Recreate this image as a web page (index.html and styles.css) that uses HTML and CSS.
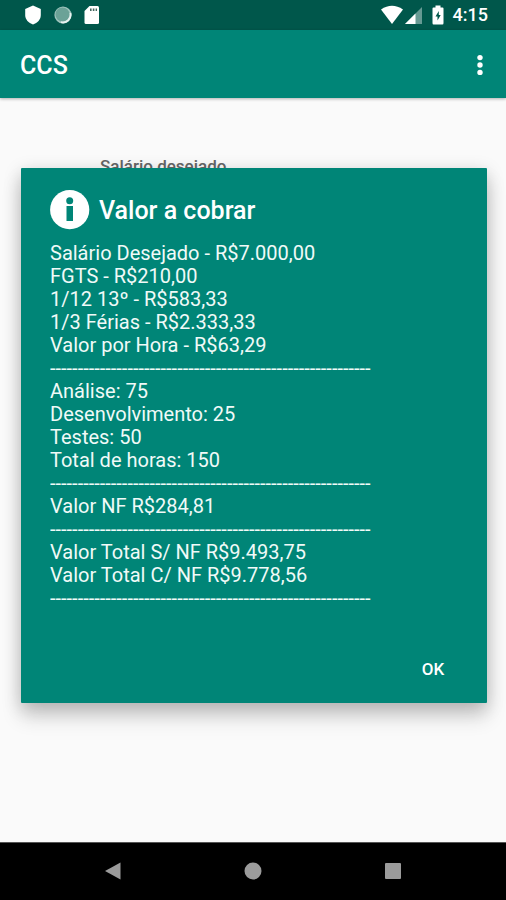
FILE: index.html
```html
<!DOCTYPE html>
<html lang="pt-BR">
<head>
<meta charset="utf-8">
<meta name="viewport" content="width=device-width, initial-scale=1">
<title>CCS</title>
<link rel="stylesheet" href="styles.css">
</head>
<body>
<div class="status-bar">
  <div class="status-group status-left">
    <svg width="18" height="20" viewBox="0 0 18 20" aria-hidden="true"><path fill="#fff" d="M9 0.500L16.800 4V10C16.800 14.500 13.500 18 9 19.500C4.500 18 1.200 14.500 1.200 10V4Z"/></svg>
    <svg width="18" height="20" viewBox="0 0 18 20" aria-hidden="true"><circle cx="9" cy="10" r="8.600" fill="#9fc4bd"/><circle cx="8.500" cy="9.500" r="7" fill="#6ba297"/><path d="M16.400 8A7.700 7.700 0 0 1 7 17.200" fill="none" stroke="#e8f2f0" stroke-width="1.800"/></svg>
    <svg width="16" height="20" viewBox="0 0 16 20" aria-hidden="true"><path fill="#fff" d="M5.500 1H13.500Q15 1 15 2.500V17.500Q15 19 13.500 19H2Q.5 19 .5 17.500V6Z"/><path fill="#45675f" d="M6 3.500h1.600v2.500H6zM8.800 3.500h1.600v2.500H8.800zM11.600 3.500h1.400v2.500H11.600z"/></svg>
  </div>
  <div class="status-group status-right">
    <svg width="22" height="20" viewBox="0 0 22 20" aria-hidden="true"><path fill="#fff" d="M0 4.500Q11-3 22 4.500L11 19Z"/></svg>
    <svg class="signal" width="17" height="20" viewBox="0 0 17 20" aria-hidden="true"><path fill="#669a93" d="M17 2V19H0Z"/><path fill="#fff" d="M10.500 8.500V19H0Z"/></svg>
    <svg class="battery" width="12" height="20" viewBox="0 0 12 20" aria-hidden="true"><path fill="#fff" d="M3.500 .5h5v2H10.500Q11.500 2.500 11.500 3.500V18Q11.500 19.500 10.500 19.500H1.500Q.5 19.500 .5 18V3.500Q.5 2.500 1.500 2.500H3.500Z"/><path fill="#00574b" d="M6.800 6L3.500 11.500H5.500V15.500L8.700 10H6.800Z"/></svg>
    <time>4:15</time>
  </div>
</div>
<header class="app-bar">
  <h1>CCS</h1>
  <button class="menu-button" type="button" aria-label="Menu">
    <svg width="8" height="22" viewBox="0 0 8 22" aria-hidden="true"><g fill="#fff"><circle cx="4" cy="3.600" r="2.700"/><circle cx="4" cy="11" r="2.700"/><circle cx="4" cy="18.400" r="2.700"/></g></svg>
  </button>
</header>
<main class="content">
  <p class="field-label">Salário desejado</p>
  <section class="dialog" role="dialog" aria-labelledby="dialog-title">
    <div class="dialog-header">
      <svg width="40" height="40" viewBox="0 0 40 40" aria-hidden="true"><circle cx="19.700" cy="19.700" r="19.600" fill="#fff"/><g fill="#008577"><circle cx="19.700" cy="10.800" r="3.500"/><path d="M16.500 16h6.500v15h-6.500z"/></g></svg>
      <h2 id="dialog-title">Valor a cobrar</h2>
    </div>
    <div class="message">
      <p>Salário Desejado - R$7.000,00</p>
      <p>FGTS - R$210,00</p>
      <p>1/12 13º - R$583,33</p>
      <p>1/3 Férias - R$2.333,33</p>
      <p>Valor por Hora - R$63,29</p>
      <p class="rule">----------------------------------------------------------</p>
      <p>Análise: 75</p>
      <p>Desenvolvimento: 25</p>
      <p>Testes: 50</p>
      <p>Total de horas: 150</p>
      <p class="rule">----------------------------------------------------------</p>
      <p>Valor NF R$284,81</p>
      <p class="rule">----------------------------------------------------------</p>
      <p>Valor Total S/ NF R$9.493,75</p>
      <p>Valor Total C/ NF R$9.778,56</p>
      <p class="rule">----------------------------------------------------------</p>
    </div>
    <div class="actions"><button class="ok-button" type="button">OK</button></div>
  </section>
</main>
<nav class="nav-bar" aria-label="Sistema">
  <button type="button" aria-label="Voltar"><svg width="18" height="18" viewBox="0 0 18 18" aria-hidden="true"><path fill="#9b9b9b" d="M1 9L16.500 .5V17.500Z"/></svg></button>
  <button type="button" aria-label="Início"><svg width="18" height="18" viewBox="0 0 18 18" aria-hidden="true"><circle cx="9" cy="9" r="8.500" fill="#9b9b9b"/></svg></button>
  <button type="button" aria-label="Recentes"><svg width="18" height="18" viewBox="0 0 18 18" aria-hidden="true"><rect x="1" y="1" width="16" height="16" rx="1" fill="#9b9b9b"/></svg></button>
</nav>
</body>
</html>
```
FILE: styles.css
```css
* {
  box-sizing: border-box;
}

body {
  margin: 0;
  min-height: 100vh;
  display: flex;
  flex-direction: column;
  background: #fafafa;
  color: #fff;
  font-family: Roboto, "Liberation Sans", sans-serif;
}

h1, h2, p {
  margin: 0;
}

svg {
  display: block;
}

button {
  border: 0;
  padding: 0;
  background: none;
  color: inherit;
  font: inherit;
  cursor: pointer;
}

.status-bar {
  display: flex;
  justify-content: space-between;
  align-items: center;
  height: 30px;
  padding: 0 18px 0 24px;
  background: #00574b;
}

.status-group {
  display: flex;
  align-items: center;
}

.status-left {
  gap: 12px;
}

.signal {
  margin-left: 2px;
}

.battery {
  margin: 0 9px 0 10px;
}

.status-bar time {
  font-size: 18px;
  font-weight: 500;
  line-height: 20px;
}

.app-bar {
  z-index: 1;
  display: flex;
  justify-content: space-between;
  align-items: center;
  height: 68px;
  padding: 2px 16px 0 20px;
  background: #008577;
  box-shadow: 0 1px 3px rgba(0, 0, 0, 0.3);
}

.app-bar h1 {
  padding-top: 2px;
  font-size: 25px;
  font-weight: 500;
  line-height: 32px;
}

.menu-button {
  padding: 0 6px;
}

.content {
  position: relative;
  flex: 1;
  padding: 58px 20px;
}

.field-label {
  padding-left: 80px;
  color: #666;
  font-size: 17px;
  font-weight: 500;
  line-height: 20px;
}

.dialog {
  position: absolute;
  top: 70px;
  left: 21px;
  right: 19px;
  padding: 22px 29px 16px;
  border-radius: 1px;
  background: #008577;
  box-shadow: 0 14px 20px rgba(0, 0, 0, 0.16), 0 4px 18px rgba(0, 0, 0, 0.18);
}

.dialog-header {
  display: flex;
  align-items: center;
  gap: 9px;
  margin-bottom: 12px;
}

.dialog-header h2 {
  padding-top: 2px;
  font-size: 25px;
  font-weight: 500;
  line-height: 32px;
}

.message {
  color: #f0faf8;
  font-size: 20px;
  line-height: 23px;
}

.rule {
  overflow: hidden;
  white-space: nowrap;
}

.actions {
  display: flex;
  justify-content: flex-end;
  margin-top: 41px;
}

.ok-button {
  min-width: 50px;
  height: 36px;
  font-size: 17px;
  font-weight: 500;
}

.nav-bar {
  display: flex;
  justify-content: center;
  gap: 90px;
  height: 58px;
  padding-bottom: 2px;
  border-top: 1px solid #555;
  background: #000;
}

.nav-bar button {
  display: flex;
  align-items: center;
  justify-content: center;
  width: 50px;
}
```
